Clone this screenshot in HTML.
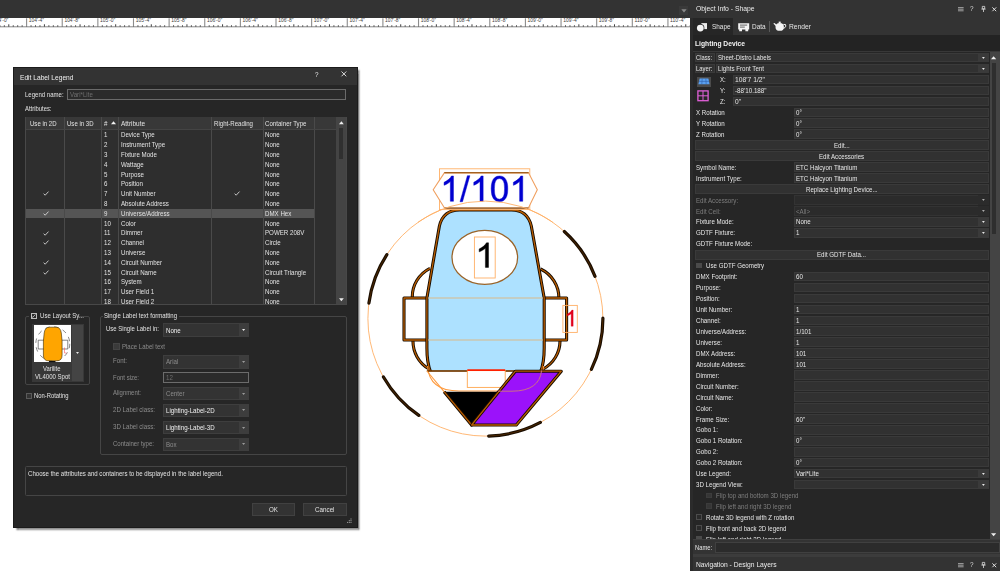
<!DOCTYPE html>
<html><head><meta charset="utf-8"><title>Edit Label Legend</title>
<style>
html,body{margin:0;padding:0;width:1000px;height:571px;overflow:hidden;}
body{width:1000px;height:571px;overflow:hidden;background:#fff;position:relative;font-family:"Liberation Sans",sans-serif;}
.t{position:absolute;white-space:nowrap;transform-origin:0 50%;filter:blur(.28px);}
div{box-sizing:border-box;}
svg{position:absolute;overflow:visible;}
</style></head><body>
<div style="position:absolute;left:0.00px;top:0.00px;width:1000.00px;height:17.90px;background:#333333;"></div>
<div style="position:absolute;left:678.50px;top:5.50px;width:9.00px;height:9.00px;background:#3a3a3a;"></div>
<svg style="left:680.5px;top:8.5px" width="6" height="4"><path d="M0.3 0.3 L5.7 0.3 L3 3.6 Z" fill="#8a8a8a"/></svg>
<svg style="left:0;top:17.7px" width="689.8" height="10" viewBox="0 0 689.8 10"><rect x="0" y="0" width="689.8" height="9.2" fill="#fff"/><path d="M-4.58 7.30V8.9 M-0.12 7.30V8.9 M4.33 7.30V8.9 M8.79 6.30V8.9 M13.24 7.30V8.9 M17.69 7.30V8.9 M22.15 7.30V8.9 M31.05 7.30V8.9 M35.51 7.30V8.9 M39.96 7.30V8.9 M44.42 6.30V8.9 M48.87 7.30V8.9 M53.32 7.30V8.9 M57.78 7.30V8.9 M66.68 7.30V8.9 M71.14 7.30V8.9 M75.59 7.30V8.9 M80.05 6.30V8.9 M84.50 7.30V8.9 M88.95 7.30V8.9 M93.41 7.30V8.9 M102.31 7.30V8.9 M106.77 7.30V8.9 M111.22 7.30V8.9 M115.68 6.30V8.9 M120.13 7.30V8.9 M124.58 7.30V8.9 M129.04 7.30V8.9 M137.94 7.30V8.9 M142.40 7.30V8.9 M146.85 7.30V8.9 M151.31 6.30V8.9 M155.76 7.30V8.9 M160.21 7.30V8.9 M164.67 7.30V8.9 M173.57 7.30V8.9 M178.03 7.30V8.9 M182.48 7.30V8.9 M186.94 6.30V8.9 M191.39 7.30V8.9 M195.84 7.30V8.9 M200.30 7.30V8.9 M209.20 7.30V8.9 M213.66 7.30V8.9 M218.11 7.30V8.9 M222.57 6.30V8.9 M227.02 7.30V8.9 M231.47 7.30V8.9 M235.93 7.30V8.9 M244.83 7.30V8.9 M249.29 7.30V8.9 M253.74 7.30V8.9 M258.20 6.30V8.9 M262.65 7.30V8.9 M267.10 7.30V8.9 M271.56 7.30V8.9 M280.46 7.30V8.9 M284.92 7.30V8.9 M289.37 7.30V8.9 M293.82 6.30V8.9 M298.28 7.30V8.9 M302.73 7.30V8.9 M307.19 7.30V8.9 M316.09 7.30V8.9 M320.55 7.30V8.9 M325.00 7.30V8.9 M329.45 6.30V8.9 M333.91 7.30V8.9 M338.36 7.30V8.9 M342.82 7.30V8.9 M351.72 7.30V8.9 M356.18 7.30V8.9 M360.63 7.30V8.9 M365.08 6.30V8.9 M369.54 7.30V8.9 M373.99 7.30V8.9 M378.45 7.30V8.9 M387.35 7.30V8.9 M391.81 7.30V8.9 M396.26 7.30V8.9 M400.71 6.30V8.9 M405.17 7.30V8.9 M409.62 7.30V8.9 M414.08 7.30V8.9 M422.98 7.30V8.9 M427.44 7.30V8.9 M431.89 7.30V8.9 M436.35 6.30V8.9 M440.80 7.30V8.9 M445.25 7.30V8.9 M449.71 7.30V8.9 M458.61 7.30V8.9 M463.07 7.30V8.9 M467.52 7.30V8.9 M471.98 6.30V8.9 M476.43 7.30V8.9 M480.88 7.30V8.9 M485.34 7.30V8.9 M494.24 7.30V8.9 M498.70 7.30V8.9 M503.15 7.30V8.9 M507.61 6.30V8.9 M512.06 7.30V8.9 M516.51 7.30V8.9 M520.97 7.30V8.9 M529.87 7.30V8.9 M534.33 7.30V8.9 M538.78 7.30V8.9 M543.24 6.30V8.9 M547.69 7.30V8.9 M552.14 7.30V8.9 M556.60 7.30V8.9 M565.50 7.30V8.9 M569.96 7.30V8.9 M574.41 7.30V8.9 M578.87 6.30V8.9 M583.32 7.30V8.9 M587.77 7.30V8.9 M592.23 7.30V8.9 M601.13 7.30V8.9 M605.59 7.30V8.9 M610.04 7.30V8.9 M614.50 6.30V8.9 M618.95 7.30V8.9 M623.40 7.30V8.9 M627.86 7.30V8.9 M636.76 7.30V8.9 M641.22 7.30V8.9 M645.67 7.30V8.9 M650.13 6.30V8.9 M654.58 7.30V8.9 M659.03 7.30V8.9 M663.49 7.30V8.9 M672.39 7.30V8.9 M676.85 7.30V8.9 M681.30 7.30V8.9 M685.76 6.30V8.9 M690.21 7.30V8.9 M694.66 7.30V8.9 M699.12 7.30V8.9 M708.02 7.30V8.9 M712.48 7.30V8.9 M716.93 7.30V8.9 M721.39 6.30V8.9 M725.84 7.30V8.9 M730.29 7.30V8.9 M734.75 7.30V8.9" stroke="#333" stroke-width="0.95" fill="none"/><path d="M-9.03 0.3V8.9 M26.60 0.3V8.9 M62.23 0.3V8.9 M97.86 0.3V8.9 M133.49 0.3V8.9 M169.12 0.3V8.9 M204.75 0.3V8.9 M240.38 0.3V8.9 M276.01 0.3V8.9 M311.64 0.3V8.9 M347.27 0.3V8.9 M382.90 0.3V8.9 M418.53 0.3V8.9 M454.16 0.3V8.9 M489.79 0.3V8.9 M525.42 0.3V8.9 M561.05 0.3V8.9 M596.68 0.3V8.9 M632.31 0.3V8.9 M667.94 0.3V8.9 M703.57 0.3V8.9" stroke="#8c8c8c" stroke-width="1.1" fill="none"/><path d="M0 8.8H689.8" stroke="#6a6a6a" stroke-width="0.8"/><text x="-6.83" y="4.5" font-size="4.7" fill="#3a3a3a" textLength="15.2" lengthAdjust="spacingAndGlyphs">104'-0&quot;</text><text x="28.80" y="4.5" font-size="4.7" fill="#3a3a3a" textLength="15.2" lengthAdjust="spacingAndGlyphs">104'-4&quot;</text><text x="64.43" y="4.5" font-size="4.7" fill="#3a3a3a" textLength="15.2" lengthAdjust="spacingAndGlyphs">104'-8&quot;</text><text x="100.06" y="4.5" font-size="4.7" fill="#3a3a3a" textLength="15.2" lengthAdjust="spacingAndGlyphs">105'-0&quot;</text><text x="135.69" y="4.5" font-size="4.7" fill="#3a3a3a" textLength="15.2" lengthAdjust="spacingAndGlyphs">105'-4&quot;</text><text x="171.32" y="4.5" font-size="4.7" fill="#3a3a3a" textLength="15.2" lengthAdjust="spacingAndGlyphs">105'-8&quot;</text><text x="206.95" y="4.5" font-size="4.7" fill="#3a3a3a" textLength="15.2" lengthAdjust="spacingAndGlyphs">106'-0&quot;</text><text x="242.58" y="4.5" font-size="4.7" fill="#3a3a3a" textLength="15.2" lengthAdjust="spacingAndGlyphs">106'-4&quot;</text><text x="278.21" y="4.5" font-size="4.7" fill="#3a3a3a" textLength="15.2" lengthAdjust="spacingAndGlyphs">106'-8&quot;</text><text x="313.84" y="4.5" font-size="4.7" fill="#3a3a3a" textLength="15.2" lengthAdjust="spacingAndGlyphs">107'-0&quot;</text><text x="349.47" y="4.5" font-size="4.7" fill="#3a3a3a" textLength="15.2" lengthAdjust="spacingAndGlyphs">107'-4&quot;</text><text x="385.10" y="4.5" font-size="4.7" fill="#3a3a3a" textLength="15.2" lengthAdjust="spacingAndGlyphs">107'-8&quot;</text><text x="420.73" y="4.5" font-size="4.7" fill="#3a3a3a" textLength="15.2" lengthAdjust="spacingAndGlyphs">108'-0&quot;</text><text x="456.36" y="4.5" font-size="4.7" fill="#3a3a3a" textLength="15.2" lengthAdjust="spacingAndGlyphs">108'-4&quot;</text><text x="491.99" y="4.5" font-size="4.7" fill="#3a3a3a" textLength="15.2" lengthAdjust="spacingAndGlyphs">108'-8&quot;</text><text x="527.62" y="4.5" font-size="4.7" fill="#3a3a3a" textLength="15.2" lengthAdjust="spacingAndGlyphs">109'-0&quot;</text><text x="563.25" y="4.5" font-size="4.7" fill="#3a3a3a" textLength="15.2" lengthAdjust="spacingAndGlyphs">109'-4&quot;</text><text x="598.88" y="4.5" font-size="4.7" fill="#3a3a3a" textLength="15.2" lengthAdjust="spacingAndGlyphs">109'-8&quot;</text><text x="634.51" y="4.5" font-size="4.7" fill="#3a3a3a" textLength="15.2" lengthAdjust="spacingAndGlyphs">110'-0&quot;</text><text x="670.14" y="4.5" font-size="4.7" fill="#3a3a3a" textLength="15.2" lengthAdjust="spacingAndGlyphs">110'-4&quot;</text><text x="705.77" y="4.5" font-size="4.7" fill="#3a3a3a" textLength="15.2" lengthAdjust="spacingAndGlyphs">110'-8&quot;</text></svg>
<div style="position:absolute;left:689.80px;top:17.70px;width:3.50px;height:553.30px;background:#2b2b2b;"></div>
<svg style="left:0;top:0" width="1000" height="571" viewBox="0 0 1000 571"><circle cx="485.4" cy="318.6" r="117.5" fill="none" stroke="#ffb066" stroke-width="0.9"/><path d="M368.93 303.06A117.5 117.5 0 0 1 386.86 254.60 M564.33 231.56A117.5 117.5 0 0 1 595.02 276.30 M602.90 318.19A117.5 117.5 0 0 1 591.37 369.37 M540.38 422.44A117.5 117.5 0 0 1 488.68 436.05 M418.85 415.43A117.5 117.5 0 0 1 383.44 376.99" fill="none" stroke="#1a0d00" stroke-width="3.2" stroke-linecap="round"/><path d="M368.93 303.06A117.5 117.5 0 0 1 386.86 254.60 M564.33 231.56A117.5 117.5 0 0 1 595.02 276.30 M602.90 318.19A117.5 117.5 0 0 1 591.37 369.37 M540.38 422.44A117.5 117.5 0 0 1 488.68 436.05 M418.85 415.43A117.5 117.5 0 0 1 383.44 376.99" fill="none" stroke="#4a2600" stroke-width="1.0" stroke-linecap="round"/><path d="M412.3 298 A32 32 0 0 1 430 268.3 M558.9 298 A32 32 0 0 0 540.6 269 M413 340 A32 32 0 0 0 429 369 M560 340 A32 32 0 0 1 542.4 369.4" fill="none" stroke="#140a00" stroke-width="3.1" stroke-linejoin="round"/><path d="M412.3 298 A32 32 0 0 1 430 268.3 M558.9 298 A32 32 0 0 0 540.6 269 M413 340 A32 32 0 0 0 429 369 M560 340 A32 32 0 0 1 542.4 369.4" fill="none" stroke="#b85c00" stroke-width="1.3" stroke-linejoin="round"/><path d="M404 298 H566.6 V340 H404 Z" fill="#fff" stroke="#140a00" stroke-width="3.1" stroke-linejoin="round"/><path d="M404 298 H566.6 V340 H404 Z" fill="none" stroke="#b85c00" stroke-width="1.3" stroke-linejoin="round"/><defs><clipPath id="cb"><rect x="380" y="190" width="220" height="181.2"/></clipPath></defs><g clip-path="url(#cb)"><path d="M459.5 210 H511.5 Q527.5 210 531.3 226 L544.2 298 V348 Q544.2 391 512 391 H459 Q426.9 391 426.9 348 V298 L439.4 226 Q443.2 210 459.5 210 Z" fill="#ade1ff" stroke="#140a00" stroke-width="3.1" stroke-linejoin="round"/><path d="M459.5 210 H511.5 Q527.5 210 531.3 226 L544.2 298 V348 Q544.2 391 512 391 H459 Q426.9 391 426.9 348 V298 L439.4 226 Q443.2 210 459.5 210 Z" fill="none" stroke="#b85c00" stroke-width="1.3" stroke-linejoin="round"/></g><path d="M428 298 H543 M428 340 H543" stroke="#d9b98a" stroke-width="1.1" fill="none"/><path d="M426.9 371 H515.4 L471.6 425 Z" fill="#fff"/><path d="M427.6 366 Q429 391 459 391 H512 Q542 391 543.6 366" fill="none" stroke="#ff9a3d" stroke-width="1.1"/><path d="M444.1 391.7 H498.6 L471.6 425 Z" fill="#000"/><path d="M426.9 371 H515.4" fill="none" stroke="#3a1d00" stroke-width="1.5" stroke-linejoin="round"/><path d="M426.9 371 H515.4" fill="none" stroke="#b85c00" stroke-width="0.8" stroke-linejoin="round"/><path d="M426.9 371 L444.1 391.7" stroke="#ff9a3d" stroke-width="1.1" fill="none"/><path d="M444.1 391.7 L471.6 425 L498.6 391.7" fill="none" stroke="#140a00" stroke-width="3.1" stroke-linejoin="round"/><path d="M444.1 391.7 L471.6 425 L498.6 391.7" fill="none" stroke="#b85c00" stroke-width="1.3" stroke-linejoin="round"/><rect x="467.3" y="370.6" width="37.9" height="16.8" fill="#fff" stroke="#ffa64d" stroke-width="0.9"/><path d="M467.3 370.1 H505.2" stroke="#ff2000" stroke-width="1.6"/><path d="M515.4 371.2 H561.3 L516.3 425 H471.6 Z" fill="#9b12fa" stroke="#140a00" stroke-width="3.1" stroke-linejoin="round"/><path d="M515.4 371.2 H561.3 L516.3 425 H471.6 Z" fill="none" stroke="#b85c00" stroke-width="1.3" stroke-linejoin="round"/><path d="M498 391.2 H512 Q539.5 391 541.6 370.5" fill="none" stroke="#cc6f86" stroke-width="1" /><ellipse cx="484.8" cy="257.4" rx="32.8" ry="27" fill="#fff" stroke="#9a6328" stroke-width="1.25"/><rect x="474.4" y="237" width="20.8" height="41" fill="none" stroke="#ffb066" stroke-width="0.9"/><path transform="translate(475.30 267.4) scale(0.01733 -0.01670)" d="M763 0H583V1147Q518 1085 412.5 1023Q307 961 223 930V1104Q374 1175 487 1276Q600 1377 647 1472H763Z" fill="#000" stroke="#000" stroke-width="26.0"/><rect x="439.5" y="168.8" width="90.3" height="40.8" fill="#fff" stroke="#ffb066" stroke-width="0.9"/><path d="M433.2 189.8 L444.5 172.6 H528.4 L537.3 189.8 L528.4 208 H444.5 Z" fill="#fff" stroke="#f0a060" stroke-width="1.1"/><path d="M444.5 172.5 H528.4 M444.5 208 H528.4" fill="none" stroke="#86501c" stroke-width="1.25"/><path d="M444.5 173 H528.4" fill="none" stroke="#d9822b" stroke-width="0.7"/><path transform="translate(440.20 201.3) scale(0.01738 -0.01719)" d="M763 0H583V1147Q518 1085 412.5 1023Q307 961 223 930V1104Q374 1175 487 1276Q600 1377 647 1472H763Z" fill="#0000d0" stroke="#0000d0" stroke-width="25.9"/><path transform="translate(460.00 201.3) scale(0.01738 -0.01719)" d="M0 -25L425 1491H569L145 -25Z" fill="#0000d0" stroke="#0000d0" stroke-width="25.9"/><path transform="translate(469.89 201.3) scale(0.01738 -0.01719)" d="M763 0H583V1147Q518 1085 412.5 1023Q307 961 223 930V1104Q374 1175 487 1276Q600 1377 647 1472H763Z" fill="#0000d0" stroke="#0000d0" stroke-width="25.9"/><path transform="translate(489.69 201.3) scale(0.01738 -0.01719)" d="M85 723Q85 983 138.5 1141.5Q192 1300 297.5 1386Q403 1472 563 1472Q681 1472 770 1424.5Q859 1377 917 1287.5Q975 1198 1008 1069.5Q1041 941 1041 723Q1041 465 988 306.5Q935 148 829.5 61.5Q724 -25 563 -25Q351 -25 230 127Q85 310 85 723ZM270 723Q270 362 354.5 242.5Q439 123 563 123Q687 123 771.5 243Q856 363 856 723Q856 1085 771.5 1204Q687 1323 561 1323Q437 1323 363 1218Q270 1084 270 723Z" fill="#0000d0" stroke="#0000d0" stroke-width="25.9"/><path transform="translate(509.49 201.3) scale(0.01738 -0.01719)" d="M763 0H583V1147Q518 1085 412.5 1023Q307 961 223 930V1104Q374 1175 487 1276Q600 1377 647 1472H763Z" fill="#0000d0" stroke="#0000d0" stroke-width="25.9"/><path d="M418.00 222.35A117.5 117.5 0 0 1 552.80 222.35" fill="none" stroke="#ffb066" stroke-width="0.9"/><rect x="562.9" y="305.4" width="14.4" height="27" fill="none" stroke="#ffb066" stroke-width="0.9"/><path transform="translate(564.60 326.2) scale(0.01123 -0.01094)" d="M763 0H583V1147Q518 1085 412.5 1023Q307 961 223 930V1104Q374 1175 487 1276Q600 1377 647 1472H763Z" fill="#e0001a" stroke="#e0001a" stroke-width="26.7"/></svg>
<div style="position:absolute;left:13.2px;top:67.0px;width:344.9px;height:461.4px;background:#262626;border:0.8px solid #1b1b1b;box-shadow:2.2px 2.6px 1.6px -0.6px rgba(0,0,0,.5);"></div>
<div style="position:absolute;left:13.80px;top:67.60px;width:343.70px;height:17.20px;background:#333333;"></div>
<div class="t" style="left:19.90px;top:73.94px;font-size:8px;line-height:8px;color:#f0f0f0;transform:scaleX(0.8295);">Edit Label Legend</div>
<div class="t" style="left:315.05px;top:71.11px;font-size:7px;line-height:7px;color:#e8e8e8;transform:scaleX(0.9000);">?</div>
<svg style="left:341px;top:71px" width="6" height="6"><path d="M0.5 0.5L5.3 5.3M5.3 0.5L0.5 5.3" stroke="#e8e8e8" stroke-width="0.9" fill="none"/></svg>
<div class="t" style="left:24.80px;top:90.64px;font-size:8px;line-height:8px;color:#e2e2e2;transform:scaleX(0.7547);">Legend name:</div>
<div style="position:absolute;left:67.2px;top:88.8px;width:278.5px;height:11.3px;background:#2b2b2b;border:0.9px solid #6a6a6a;"></div>
<div class="t" style="left:69.50px;top:90.64px;font-size:8px;line-height:8px;color:#6e6e6e;transform:scaleX(0.7700);">Vari*Lite</div>
<div class="t" style="left:24.80px;top:105.24px;font-size:8px;line-height:8px;color:#e2e2e2;transform:scaleX(0.7358);">Attributes:</div>
<div style="position:absolute;left:25.30px;top:116.60px;width:321.30px;height:188.40px;background:#2e2e2e;border:0.8px solid #484848;"></div>
<div style="position:absolute;left:25.80px;top:117.10px;width:310.50px;height:12.60px;background:#383838;"></div>
<div style="position:absolute;left:336.30px;top:117.10px;width:9.80px;height:187.40px;background:#444444;"></div>
<div style="position:absolute;left:338.90px;top:128.20px;width:4.00px;height:31.20px;background:#303030;"></div>
<svg style="left:338.6px;top:121px" width="5" height="4"><path d="M0 3.2L2.4 0.3L4.8 3.2Z" fill="#eee"/></svg>
<svg style="left:338.6px;top:298px" width="5" height="4"><path d="M0 0.3L2.4 3.2L4.8 0.3Z" fill="#eee"/></svg>
<div style="position:absolute;left:25.90px;top:208.74px;width:288.20px;height:9.50px;background:#555555;"></div>
<div style="position:absolute;left:63.60px;top:117.10px;width:0.90px;height:187.40px;background:#4a4a4a;"></div>
<div style="position:absolute;left:101.00px;top:117.10px;width:0.90px;height:187.40px;background:#4a4a4a;"></div>
<div style="position:absolute;left:117.60px;top:117.10px;width:0.90px;height:187.40px;background:#4a4a4a;"></div>
<div style="position:absolute;left:211.10px;top:117.10px;width:0.90px;height:187.40px;background:#4a4a4a;"></div>
<div style="position:absolute;left:262.80px;top:117.10px;width:0.90px;height:187.40px;background:#4a4a4a;"></div>
<div style="position:absolute;left:313.70px;top:117.10px;width:0.90px;height:187.40px;background:#4a4a4a;"></div>
<div style="position:absolute;left:25.80px;top:129.40px;width:310.50px;height:0.80px;background:#444;"></div>
<div class="t" style="left:29.50px;top:120.24px;font-size:8px;line-height:8px;color:#e2e2e2;transform:scaleX(0.7545);">Use in 2D</div>
<div class="t" style="left:66.70px;top:120.24px;font-size:8px;line-height:8px;color:#e2e2e2;transform:scaleX(0.7545);">Use in 3D</div>
<div class="t" style="left:103.80px;top:120.24px;font-size:8px;line-height:8px;color:#e2e2e2;transform:scaleX(0.7700);">#</div>
<svg style="left:111.2px;top:121.4px" width="5" height="4"><path d="M0 3.3L2.5 0.2L5 3.3Z" fill="#f2f2f2"/></svg>
<div class="t" style="left:121.00px;top:120.24px;font-size:8px;line-height:8px;color:#e2e2e2;transform:scaleX(0.8056);">Attribute</div>
<div class="t" style="left:213.60px;top:120.24px;font-size:8px;line-height:8px;color:#e2e2e2;transform:scaleX(0.7626);">Right-Reading</div>
<div class="t" style="left:265.20px;top:120.24px;font-size:8px;line-height:8px;color:#e2e2e2;transform:scaleX(0.7670);">Container Type</div>
<div class="t" style="left:103.60px;top:131.34px;font-size:8px;line-height:8px;color:#e2e2e2;transform:scaleX(0.7700);">1</div>
<div class="t" style="left:120.80px;top:131.34px;font-size:8px;line-height:8px;color:#e2e2e2;transform:scaleX(0.7700);">Device Type</div>
<div class="t" style="left:265.00px;top:131.34px;font-size:8px;line-height:8px;color:#e2e2e2;transform:scaleX(0.7700);">None</div>
<div class="t" style="left:103.60px;top:141.15px;font-size:8px;line-height:8px;color:#e2e2e2;transform:scaleX(0.7700);">2</div>
<div class="t" style="left:120.80px;top:141.15px;font-size:8px;line-height:8px;color:#e2e2e2;transform:scaleX(0.7700);">Instrument Type</div>
<div class="t" style="left:265.00px;top:141.15px;font-size:8px;line-height:8px;color:#e2e2e2;transform:scaleX(0.7700);">None</div>
<div class="t" style="left:103.60px;top:150.95px;font-size:8px;line-height:8px;color:#e2e2e2;transform:scaleX(0.7700);">3</div>
<div class="t" style="left:120.80px;top:150.95px;font-size:8px;line-height:8px;color:#e2e2e2;transform:scaleX(0.7700);">Fixture Mode</div>
<div class="t" style="left:265.00px;top:150.95px;font-size:8px;line-height:8px;color:#e2e2e2;transform:scaleX(0.7700);">None</div>
<div class="t" style="left:103.60px;top:160.75px;font-size:8px;line-height:8px;color:#e2e2e2;transform:scaleX(0.7700);">4</div>
<div class="t" style="left:120.80px;top:160.75px;font-size:8px;line-height:8px;color:#e2e2e2;transform:scaleX(0.7700);">Wattage</div>
<div class="t" style="left:265.00px;top:160.75px;font-size:8px;line-height:8px;color:#e2e2e2;transform:scaleX(0.7700);">None</div>
<div class="t" style="left:103.60px;top:170.56px;font-size:8px;line-height:8px;color:#e2e2e2;transform:scaleX(0.7700);">5</div>
<div class="t" style="left:120.80px;top:170.56px;font-size:8px;line-height:8px;color:#e2e2e2;transform:scaleX(0.7700);">Purpose</div>
<div class="t" style="left:265.00px;top:170.56px;font-size:8px;line-height:8px;color:#e2e2e2;transform:scaleX(0.7700);">None</div>
<div class="t" style="left:103.60px;top:180.37px;font-size:8px;line-height:8px;color:#e2e2e2;transform:scaleX(0.7700);">6</div>
<div class="t" style="left:120.80px;top:180.37px;font-size:8px;line-height:8px;color:#e2e2e2;transform:scaleX(0.7700);">Position</div>
<div class="t" style="left:265.00px;top:180.37px;font-size:8px;line-height:8px;color:#e2e2e2;transform:scaleX(0.7700);">None</div>
<div class="t" style="left:103.60px;top:190.17px;font-size:8px;line-height:8px;color:#e2e2e2;transform:scaleX(0.7700);">7</div>
<div class="t" style="left:120.80px;top:190.17px;font-size:8px;line-height:8px;color:#e2e2e2;transform:scaleX(0.7700);">Unit Number</div>
<div class="t" style="left:265.00px;top:190.17px;font-size:8px;line-height:8px;color:#e2e2e2;transform:scaleX(0.7700);">None</div>
<svg style="left:42.50px;top:191.43px" width="6.00" height="5.00" viewBox="0 0 6 5"><path d="M0.6 2.7L2.2 4.2L5.5 0.6" stroke="#e8e8e8" stroke-width="0.8" fill="none"/></svg>
<svg style="left:234.00px;top:191.43px" width="6.00" height="5.00" viewBox="0 0 6 5"><path d="M0.6 2.7L2.2 4.2L5.5 0.6" stroke="#e8e8e8" stroke-width="0.8" fill="none"/></svg>
<div class="t" style="left:103.60px;top:199.97px;font-size:8px;line-height:8px;color:#e2e2e2;transform:scaleX(0.7700);">8</div>
<div class="t" style="left:120.80px;top:199.97px;font-size:8px;line-height:8px;color:#e2e2e2;transform:scaleX(0.7700);">Absolute Address</div>
<div class="t" style="left:265.00px;top:199.97px;font-size:8px;line-height:8px;color:#e2e2e2;transform:scaleX(0.7700);">None</div>
<div class="t" style="left:103.60px;top:209.78px;font-size:8px;line-height:8px;color:#e2e2e2;transform:scaleX(0.7700);">9</div>
<div class="t" style="left:120.80px;top:209.78px;font-size:8px;line-height:8px;color:#e2e2e2;transform:scaleX(0.7700);">Universe/Address</div>
<div class="t" style="left:265.00px;top:209.78px;font-size:8px;line-height:8px;color:#e2e2e2;transform:scaleX(0.7700);">DMX Hex</div>
<svg style="left:42.50px;top:211.04px" width="6.00" height="5.00" viewBox="0 0 6 5"><path d="M0.6 2.7L2.2 4.2L5.5 0.6" stroke="#e8e8e8" stroke-width="0.8" fill="none"/></svg>
<div class="t" style="left:103.60px;top:219.59px;font-size:8px;line-height:8px;color:#e2e2e2;transform:scaleX(0.7700);">10</div>
<div class="t" style="left:120.80px;top:219.59px;font-size:8px;line-height:8px;color:#e2e2e2;transform:scaleX(0.7700);">Color</div>
<div class="t" style="left:265.00px;top:219.59px;font-size:8px;line-height:8px;color:#e2e2e2;transform:scaleX(0.7700);">None</div>
<div class="t" style="left:103.60px;top:229.39px;font-size:8px;line-height:8px;color:#e2e2e2;transform:scaleX(0.7700);">11</div>
<div class="t" style="left:120.80px;top:229.39px;font-size:8px;line-height:8px;color:#e2e2e2;transform:scaleX(0.7700);">Dimmer</div>
<div class="t" style="left:265.00px;top:229.39px;font-size:8px;line-height:8px;color:#e2e2e2;transform:scaleX(0.7700);">POWER 208V</div>
<svg style="left:42.50px;top:230.65px" width="6.00" height="5.00" viewBox="0 0 6 5"><path d="M0.6 2.7L2.2 4.2L5.5 0.6" stroke="#e8e8e8" stroke-width="0.8" fill="none"/></svg>
<div class="t" style="left:103.60px;top:239.19px;font-size:8px;line-height:8px;color:#e2e2e2;transform:scaleX(0.7700);">12</div>
<div class="t" style="left:120.80px;top:239.19px;font-size:8px;line-height:8px;color:#e2e2e2;transform:scaleX(0.7700);">Channel</div>
<div class="t" style="left:265.00px;top:239.19px;font-size:8px;line-height:8px;color:#e2e2e2;transform:scaleX(0.7700);">Circle</div>
<svg style="left:42.50px;top:240.45px" width="6.00" height="5.00" viewBox="0 0 6 5"><path d="M0.6 2.7L2.2 4.2L5.5 0.6" stroke="#e8e8e8" stroke-width="0.8" fill="none"/></svg>
<div class="t" style="left:103.60px;top:249.00px;font-size:8px;line-height:8px;color:#e2e2e2;transform:scaleX(0.7700);">13</div>
<div class="t" style="left:120.80px;top:249.00px;font-size:8px;line-height:8px;color:#e2e2e2;transform:scaleX(0.7700);">Universe</div>
<div class="t" style="left:265.00px;top:249.00px;font-size:8px;line-height:8px;color:#e2e2e2;transform:scaleX(0.7700);">None</div>
<div class="t" style="left:103.60px;top:258.81px;font-size:8px;line-height:8px;color:#e2e2e2;transform:scaleX(0.7700);">14</div>
<div class="t" style="left:120.80px;top:258.81px;font-size:8px;line-height:8px;color:#e2e2e2;transform:scaleX(0.7700);">Circuit Number</div>
<div class="t" style="left:265.00px;top:258.81px;font-size:8px;line-height:8px;color:#e2e2e2;transform:scaleX(0.7700);">None</div>
<svg style="left:42.50px;top:260.06px" width="6.00" height="5.00" viewBox="0 0 6 5"><path d="M0.6 2.7L2.2 4.2L5.5 0.6" stroke="#e8e8e8" stroke-width="0.8" fill="none"/></svg>
<div class="t" style="left:103.60px;top:268.61px;font-size:8px;line-height:8px;color:#e2e2e2;transform:scaleX(0.7700);">15</div>
<div class="t" style="left:120.80px;top:268.61px;font-size:8px;line-height:8px;color:#e2e2e2;transform:scaleX(0.7700);">Circuit Name</div>
<div class="t" style="left:265.00px;top:268.61px;font-size:8px;line-height:8px;color:#e2e2e2;transform:scaleX(0.7700);">Circuit Triangle</div>
<svg style="left:42.50px;top:269.87px" width="6.00" height="5.00" viewBox="0 0 6 5"><path d="M0.6 2.7L2.2 4.2L5.5 0.6" stroke="#e8e8e8" stroke-width="0.8" fill="none"/></svg>
<div class="t" style="left:103.60px;top:278.41px;font-size:8px;line-height:8px;color:#e2e2e2;transform:scaleX(0.7700);">16</div>
<div class="t" style="left:120.80px;top:278.41px;font-size:8px;line-height:8px;color:#e2e2e2;transform:scaleX(0.7700);">System</div>
<div class="t" style="left:265.00px;top:278.41px;font-size:8px;line-height:8px;color:#e2e2e2;transform:scaleX(0.7700);">None</div>
<div class="t" style="left:103.60px;top:288.22px;font-size:8px;line-height:8px;color:#e2e2e2;transform:scaleX(0.7700);">17</div>
<div class="t" style="left:120.80px;top:288.22px;font-size:8px;line-height:8px;color:#e2e2e2;transform:scaleX(0.7700);">User Field 1</div>
<div class="t" style="left:265.00px;top:288.22px;font-size:8px;line-height:8px;color:#e2e2e2;transform:scaleX(0.7700);">None</div>
<div class="t" style="left:103.60px;top:298.02px;font-size:8px;line-height:8px;color:#e2e2e2;transform:scaleX(0.7700);">18</div>
<div class="t" style="left:120.80px;top:298.02px;font-size:8px;line-height:8px;color:#e2e2e2;transform:scaleX(0.7700);">User Field 2</div>
<div class="t" style="left:265.00px;top:298.02px;font-size:8px;line-height:8px;color:#e2e2e2;transform:scaleX(0.7700);">None</div>
<div style="position:absolute;left:25.2px;top:315.7px;width:65.0px;height:69.5px;border:0.8px solid #454545;border-radius:2px;"></div>
<div style="position:absolute;left:29.00px;top:311.00px;width:50.00px;height:9.00px;background:#262626;"></div>
<div style="position:absolute;left:30.6px;top:312.6px;width:6.2px;height:6.2px;background:#2b2b2b;border:0.8px solid #bdbdbd;"></div>
<svg style="left:31.30px;top:313.70px" width="4.80" height="4.00" viewBox="0 0 6 5"><path d="M0.6 2.7L2.2 4.2L5.5 0.6" stroke="#fff" stroke-width="0.8" fill="none"/></svg>
<div class="t" style="left:39.50px;top:312.44px;font-size:8px;line-height:8px;color:#e2e2e2;transform:scaleX(0.7573);">Use Layout Sy...</div>
<div style="position:absolute;left:32.10px;top:323.50px;width:51.60px;height:58.00px;background:#383838;"></div>
<div style="position:absolute;left:72.30px;top:324.50px;width:10.60px;height:56.00px;background:#444444;"></div>
<svg style="left:75.8px;top:351.6px" width="3.2" height="2.4"><path d="M0 0.1L1.5 2L3 0.1Z" fill="#e6e6e6"/></svg>
<div style="position:absolute;left:34.20px;top:325.20px;width:37.20px;height:37.20px;background:#ffffff;"></div>
<svg style="left:34.2px;top:325.2px" width="37.2" height="37.2" viewBox="0 0 37.2 37.2"><circle cx="18.8" cy="18.8" r="17" fill="none" stroke="#555" stroke-width="0.7" stroke-dasharray="4.5 4.5"/><path d="M4.2 15.2H33.8V24H4.2Z" fill="#fff" stroke="#333" stroke-width="0.6"/><path d="M15.5 2.2H22Q26.6 2.2 27.3 8L28.1 16V30Q28.1 35.8 23 35.8H14.4Q9.4 35.8 9.4 30V16L10.2 8Q10.9 2.2 15.5 2.2Z" fill="#ffa500" stroke="#3a2a00" stroke-width="0.6"/><path d="M30.5 22.5V28H32.6" stroke="#ff5a5a" stroke-width="0.6" fill="none"/><path d="M15 36.6H21.5" stroke="#111" stroke-width="1.2"/></svg>
<div class="t" style="left:43.45px;top:365.14px;font-size:8px;line-height:8px;color:#e2e2e2;transform:scaleX(0.7335);">Varilite</div>
<div class="t" style="left:34.70px;top:372.54px;font-size:8px;line-height:8px;color:#e2e2e2;transform:scaleX(0.7566);">VL4000 Spot</div>
<div style="position:absolute;left:25.7px;top:393px;width:6.2px;height:6.2px;background:#333;border:0.8px solid #5a5a5a;"></div>
<div class="t" style="left:34.20px;top:392.24px;font-size:8px;line-height:8px;color:#e2e2e2;transform:scaleX(0.7320);">Non-Rotating</div>
<div style="position:absolute;left:99.8px;top:315.7px;width:246.8px;height:139.60000000000002px;border:0.8px solid #454545;border-radius:2px;"></div>
<div style="position:absolute;left:103.00px;top:311.00px;width:76.00px;height:9.00px;background:#262626;"></div>
<div class="t" style="left:104.40px;top:311.74px;font-size:8px;line-height:8px;color:#e2e2e2;transform:scaleX(0.7531);">Single Label text formatting</div>
<div class="t" style="left:105.80px;top:325.24px;font-size:8px;line-height:8px;color:#e2e2e2;transform:scaleX(0.7449);">Use Single Label in:</div>
<div style="position:absolute;left:163.30px;top:323.40px;width:86.00px;height:13.60px;background:#333333;border:0.8px solid #3e3e3e;"></div>
<div style="position:absolute;left:238.50px;top:324.20px;width:10.00px;height:12.00px;background:#3d3d3d;"></div>
<svg style="left:242.20px;top:329.40px" width="3.4" height="2.4"><path d="M0 0.1L1.6 2.1L3.2 0.1Z" fill="#e6e6e6"/></svg>
<div class="t" style="left:165.50px;top:326.54px;font-size:8px;line-height:8px;color:#f0f0f0;transform:scaleX(0.7700);">None</div>
<div style="position:absolute;left:113.4px;top:343.4px;width:6.3px;height:6.3px;background:#3a3a3a;border:0.8px solid #444;"></div>
<div class="t" style="left:122.00px;top:342.84px;font-size:8px;line-height:8px;color:#8c8c8c;transform:scaleX(0.7554);">Place Label text</div>
<div class="t" style="left:112.90px;top:357.44px;font-size:8px;line-height:8px;color:#8c8c8c;transform:scaleX(0.7700);">Font:</div>
<div style="position:absolute;left:163.30px;top:355.40px;width:86.00px;height:13.50px;background:#333333;border:0.8px solid #3e3e3e;"></div>
<div style="position:absolute;left:238.50px;top:356.20px;width:10.00px;height:11.90px;background:#3d3d3d;"></div>
<svg style="left:242.20px;top:361.35px" width="3.4" height="2.4"><path d="M0 0.1L1.6 2.1L3.2 0.1Z" fill="#999"/></svg>
<div class="t" style="left:165.50px;top:358.49px;font-size:8px;line-height:8px;color:#8c8c8c;transform:scaleX(0.7700);">Arial</div>
<div class="t" style="left:112.90px;top:373.84px;font-size:8px;line-height:8px;color:#8c8c8c;transform:scaleX(0.7498);">Font size:</div>
<div style="position:absolute;left:163.3px;top:371.8px;width:86px;height:11.2px;background:#2b2b2b;border:0.9px solid #6c6c6c;"></div>
<div class="t" style="left:165.50px;top:373.84px;font-size:8px;line-height:8px;color:#6e6e6e;transform:scaleX(0.7700);">12</div>
<div class="t" style="left:112.90px;top:389.14px;font-size:8px;line-height:8px;color:#8c8c8c;transform:scaleX(0.7408);">Alignment:</div>
<div style="position:absolute;left:163.30px;top:387.00px;width:86.00px;height:13.20px;background:#333333;border:0.8px solid #3e3e3e;"></div>
<div style="position:absolute;left:238.50px;top:387.80px;width:10.00px;height:11.60px;background:#3d3d3d;"></div>
<svg style="left:242.20px;top:392.80px" width="3.4" height="2.4"><path d="M0 0.1L1.6 2.1L3.2 0.1Z" fill="#999"/></svg>
<div class="t" style="left:165.50px;top:389.94px;font-size:8px;line-height:8px;color:#8c8c8c;transform:scaleX(0.7700);">Center</div>
<div class="t" style="left:112.90px;top:406.04px;font-size:8px;line-height:8px;color:#8c8c8c;transform:scaleX(0.7679);">2D Label class:</div>
<div style="position:absolute;left:163.30px;top:403.50px;width:86.00px;height:13.50px;background:#333333;border:0.8px solid #3e3e3e;"></div>
<div style="position:absolute;left:238.50px;top:404.30px;width:10.00px;height:11.90px;background:#3d3d3d;"></div>
<svg style="left:242.20px;top:409.45px" width="3.4" height="2.4"><path d="M0 0.1L1.6 2.1L3.2 0.1Z" fill="#999"/></svg>
<div class="t" style="left:165.50px;top:406.59px;font-size:8px;line-height:8px;color:#f0f0f0;transform:scaleX(0.7700);">Lighting-Label-2D</div>
<div class="t" style="left:112.90px;top:423.24px;font-size:8px;line-height:8px;color:#8c8c8c;transform:scaleX(0.7679);">3D Label class:</div>
<div style="position:absolute;left:163.30px;top:420.60px;width:86.00px;height:13.80px;background:#333333;border:0.8px solid #3e3e3e;"></div>
<div style="position:absolute;left:238.50px;top:421.40px;width:10.00px;height:12.20px;background:#3d3d3d;"></div>
<svg style="left:242.20px;top:426.70px" width="3.4" height="2.4"><path d="M0 0.1L1.6 2.1L3.2 0.1Z" fill="#999"/></svg>
<div class="t" style="left:165.50px;top:423.84px;font-size:8px;line-height:8px;color:#f0f0f0;transform:scaleX(0.7700);">Lighting-Label-3D</div>
<div class="t" style="left:112.90px;top:439.84px;font-size:8px;line-height:8px;color:#8c8c8c;transform:scaleX(0.7558);">Container type:</div>
<div style="position:absolute;left:163.30px;top:437.60px;width:86.00px;height:13.20px;background:#333333;border:0.8px solid #3e3e3e;"></div>
<div style="position:absolute;left:238.50px;top:438.40px;width:10.00px;height:11.60px;background:#3d3d3d;"></div>
<svg style="left:242.20px;top:443.40px" width="3.4" height="2.4"><path d="M0 0.1L1.6 2.1L3.2 0.1Z" fill="#999"/></svg>
<div class="t" style="left:165.50px;top:440.54px;font-size:8px;line-height:8px;color:#8c8c8c;transform:scaleX(0.7700);">Box</div>
<div style="position:absolute;left:25.3px;top:465.5px;width:321.3px;height:30px;border:0.8px solid #454545;border-radius:1.5px;"></div>
<div class="t" style="left:28.00px;top:469.54px;font-size:8px;line-height:8px;color:#e2e2e2;transform:scaleX(0.7605);">Choose the attributes and containers to be displayed in the label legend.</div>
<div style="position:absolute;left:252px;top:503.3px;width:42.8px;height:12.8px;background:#333;border:0.8px solid #414141;"></div>
<div style="position:absolute;left:303.3px;top:503.3px;width:43.5px;height:12.8px;background:#333;border:0.8px solid #414141;"></div>
<div class="t" style="left:268.95px;top:506.04px;font-size:8px;line-height:8px;color:#e2e2e2;transform:scaleX(0.7700);">OK</div>
<div class="t" style="left:315.25px;top:506.04px;font-size:8px;line-height:8px;color:#e2e2e2;transform:scaleX(0.7831);">Cancel</div>
<svg style="left:347px;top:518px" width="5" height="5"><path d="M4 0.5V1.5M4 2.2V3.2M4 3.9V4.9M2.3 2.2V3.2M2.3 3.9V4.9M0.6 3.9V4.9" stroke="#bbb" stroke-width="0.9"/></svg>
<div style="position:absolute;left:693.20px;top:0.00px;width:306.80px;height:571.00px;background:#262626;"></div>
<div style="position:absolute;left:689.30px;top:0.00px;width:4.00px;height:17.20px;background:#333333;"></div>
<div style="position:absolute;left:693.20px;top:0.00px;width:306.80px;height:17.60px;background:#333333;"></div>
<div class="t" style="left:695.50px;top:4.74px;font-size:8px;line-height:8px;color:#ececec;transform:scaleX(0.8502);">Object Info - Shape</div>
<svg style="left:958.3px;top:6.499999999999999px" width="6" height="5"><path d="M0 0.6H5.6M0 2.2H5.6M0 3.8H5.6" stroke="#d0d0d0" stroke-width="0.7"/></svg>
<div class="t" style="left:970.13px;top:5.17px;font-size:7.5px;line-height:7.5px;color:#dcdcdc;transform:scaleX(0.8500);">?</div>
<svg style="left:980.5px;top:5.699999999999999px" width="5" height="6.5"><path d="M1.3 0.4H3.7V2.8H1.3ZM0.4 3.1H4.6M2.5 3.1V6" stroke="#dcdcdc" stroke-width="0.8" fill="none"/></svg>
<svg style="left:991.8px;top:6.499999999999999px" width="5" height="5"><path d="M0.4 0.4L4.2 4.2M4.2 0.4L0.4 4.2" stroke="#e8e8e8" stroke-width="0.95" fill="none"/></svg>
<div style="position:absolute;left:693.20px;top:17.90px;width:306.80px;height:17.10px;background:#333333;"></div>
<div style="position:absolute;left:693.20px;top:17.90px;width:40.00px;height:17.30px;background:#262626;"></div>
<div style="position:absolute;left:769.40px;top:20.50px;width:0.70px;height:11.50px;background:#5a5a5a;"></div>
<svg style="left:695.6px;top:21.5px" width="13" height="10" viewBox="0 0 13 10"><rect x="5.4" y="1.1" width="5.6" height="6" fill="#ededed"/><circle cx="4.3" cy="6.1" r="4.1" fill="#262626"/><circle cx="4.3" cy="6.1" r="3.4" fill="#f4f4f4"/></svg>
<div class="t" style="left:711.60px;top:22.64px;font-size:8px;line-height:8px;color:#e6e6e6;transform:scaleX(0.7998);">Shape</div>
<svg style="left:738px;top:22.8px" width="11.4" height="8.5" viewBox="0 0 11.4 8.5"><path d="M0.2 0.2H11.2V6.4H10.2V8.2H7.4V6.4H4V8.2H1.2V6.4H0.2Z" fill="#f4f4f4"/><path d="M2 2.1H9.2M2 4.1H6.8" stroke="#333" stroke-width="0.75"/></svg>
<div class="t" style="left:752.40px;top:22.64px;font-size:8px;line-height:8px;color:#e6e6e6;transform:scaleX(0.8049);">Data</div>
<svg style="left:773.4px;top:21.4px" width="14" height="10" viewBox="0 0 14 10"><ellipse cx="6.7" cy="5.9" rx="4.2" ry="3.9" fill="#f4f4f4"/><path d="M5.7 0.6H7.7V2.2H5.7Z" fill="#f4f4f4"/><path d="M3.2 5.6L0.3 2.4L1.6 1.9L4 4.2Z" fill="#f4f4f4"/><path d="M10.4 3.4Q13.4 2.8 12.8 5.2Q12.2 7 10.2 7.4" stroke="#f4f4f4" stroke-width="1" fill="none"/></svg>
<div class="t" style="left:789.00px;top:22.64px;font-size:8px;line-height:8px;color:#e6e6e6;transform:scaleX(0.8385);">Render</div>
<div style="position:absolute;left:693.20px;top:35.00px;width:306.80px;height:16.00px;background:#232323;"></div>
<div class="t" style="left:695.00px;top:39.64px;font-size:8px;line-height:8px;color:#f4f4f4;font-weight:bold;transform:scaleX(0.8395);">Lighting Device</div>
<div style="position:absolute;left:693.20px;top:51.00px;width:306.80px;height:488.00px;background:#262626;"></div>
<div style="position:absolute;left:693.20px;top:51.00px;width:306.80px;height:1.20px;background:#383838;"></div>
<div style="position:absolute;left:694.80px;top:52.80px;width:19.80px;height:9.70px;background:#313131;border:0.7px solid #3a3a3a;"></div>
<div style="position:absolute;left:715.80px;top:52.80px;width:273.10px;height:9.70px;background:#313131;border:0.7px solid #3a3a3a;"></div>
<div style="position:absolute;left:978.40px;top:52.90px;width:10.50px;height:9.50px;background:#3a3a3a;"></div>
<svg style="left:982.2px;top:56.70px" width="3" height="2.2"><path d="M0 0.1L1.4 1.9L2.8 0.1Z" fill="#e6e6e6"/></svg>
<div class="t" style="left:696.20px;top:54.29px;font-size:8px;line-height:8px;color:#e6e6e6;transform:scaleX(0.7199);">Class:</div>
<div class="t" style="left:717.80px;top:54.29px;font-size:8px;line-height:8px;color:#e6e6e6;transform:scaleX(0.7544);">Sheet-Distro Labels</div>
<div style="position:absolute;left:694.80px;top:63.75px;width:19.80px;height:9.70px;background:#313131;border:0.7px solid #3a3a3a;"></div>
<div style="position:absolute;left:715.80px;top:63.75px;width:273.10px;height:9.70px;background:#313131;border:0.7px solid #3a3a3a;"></div>
<div style="position:absolute;left:978.40px;top:63.85px;width:10.50px;height:9.50px;background:#3a3a3a;"></div>
<svg style="left:982.2px;top:67.65px" width="3" height="2.2"><path d="M0 0.1L1.4 1.9L2.8 0.1Z" fill="#e6e6e6"/></svg>
<div class="t" style="left:696.20px;top:65.24px;font-size:8px;line-height:8px;color:#e6e6e6;transform:scaleX(0.7422);">Layer:</div>
<div class="t" style="left:718.20px;top:65.24px;font-size:8px;line-height:8px;color:#e6e6e6;transform:scaleX(0.7739);">Lights Front Tent</div>
<div style="position:absolute;left:733.20px;top:74.69px;width:255.70px;height:9.70px;background:#313131;border:0.7px solid #3a3a3a;"></div>
<div class="t" style="left:719.60px;top:76.18px;font-size:8px;line-height:8px;color:#e6e6e6;transform:scaleX(0.7700);">X:</div>
<div class="t" style="left:735.40px;top:76.18px;font-size:8px;line-height:8px;color:#e6e6e6;transform:scaleX(0.8450);">108'7 1/2"</div>
<div style="position:absolute;left:733.20px;top:85.64px;width:255.70px;height:9.70px;background:#313131;border:0.7px solid #3a3a3a;"></div>
<div class="t" style="left:719.60px;top:87.13px;font-size:8px;line-height:8px;color:#e6e6e6;transform:scaleX(0.7700);">Y:</div>
<div class="t" style="left:735.40px;top:87.13px;font-size:8px;line-height:8px;color:#e6e6e6;transform:scaleX(0.7798);">-88'10.188"</div>
<div style="position:absolute;left:733.20px;top:96.58px;width:255.70px;height:9.70px;background:#313131;border:0.7px solid #3a3a3a;"></div>
<div class="t" style="left:719.60px;top:98.07px;font-size:8px;line-height:8px;color:#e6e6e6;transform:scaleX(0.7700);">Z:</div>
<div class="t" style="left:735.40px;top:98.07px;font-size:8px;line-height:8px;color:#e6e6e6;transform:scaleX(0.8232);">0"</div>
<svg style="left:697.3px;top:76.8px" width="14" height="10" viewBox="0 0 14 10"><rect x="0" y="0" width="14" height="10" fill="#4a4a4a"/><path d="M2.6 1.6H11.4L12.6 7.2H1.4Z" fill="#5aa0f0"/><path d="M1.8 4.4H12.2M5.2 1.6L4.8 7.2M8.8 1.6L9.2 7.2" stroke="#2d5fa8" stroke-width="0.6"/></svg>
<svg style="left:697.3px;top:90.4px" width="12" height="11.6" viewBox="0 0 12 11.6"><rect x="0.9" y="0.9" width="10.2" height="9.8" fill="#262626" stroke="#e060d8" stroke-width="1.3"/><path d="M6 1V10.6M1 5.8H11" stroke="#e060d8" stroke-width="1.0"/></svg>
<div style="position:absolute;left:794.20px;top:107.53px;width:194.70px;height:9.70px;background:#313131;border:0.7px solid #3a3a3a;"></div>
<div class="t" style="left:696.20px;top:109.02px;font-size:8px;line-height:8px;color:#e6e6e6;transform:scaleX(0.7700);">X Rotation</div>
<div class="t" style="left:796.40px;top:109.02px;font-size:8px;line-height:8px;color:#e6e6e6;transform:scaleX(0.7700);">0°</div>
<div style="position:absolute;left:794.20px;top:118.48px;width:194.70px;height:9.70px;background:#313131;border:0.7px solid #3a3a3a;"></div>
<div class="t" style="left:696.20px;top:119.97px;font-size:8px;line-height:8px;color:#e6e6e6;transform:scaleX(0.7700);">Y Rotation</div>
<div class="t" style="left:796.40px;top:119.97px;font-size:8px;line-height:8px;color:#e6e6e6;transform:scaleX(0.7700);">0°</div>
<div style="position:absolute;left:794.20px;top:129.42px;width:194.70px;height:9.70px;background:#313131;border:0.7px solid #3a3a3a;"></div>
<div class="t" style="left:696.20px;top:130.91px;font-size:8px;line-height:8px;color:#e6e6e6;transform:scaleX(0.7700);">Z Rotation</div>
<div class="t" style="left:796.40px;top:130.91px;font-size:8px;line-height:8px;color:#e6e6e6;transform:scaleX(0.7700);">0°</div>
<div style="position:absolute;left:694.80px;top:140.37px;width:294.10px;height:9.70px;background:#313131;border:0.7px solid #3a3a3a;"></div>
<div class="t" style="left:833.98px;top:141.86px;font-size:8px;line-height:8px;color:#e6e6e6;transform:scaleX(0.7700);">Edit...</div>
<div style="position:absolute;left:694.80px;top:151.31px;width:294.10px;height:9.70px;background:#313131;border:0.7px solid #3a3a3a;"></div>
<div class="t" style="left:819.25px;top:152.80px;font-size:8px;line-height:8px;color:#e6e6e6;transform:scaleX(0.7700);">Edit Accessories</div>
<div style="position:absolute;left:794.20px;top:162.26px;width:194.70px;height:9.70px;background:#313131;border:0.7px solid #3a3a3a;"></div>
<div class="t" style="left:696.20px;top:163.75px;font-size:8px;line-height:8px;color:#e6e6e6;transform:scaleX(0.7700);">Symbol Name:</div>
<div class="t" style="left:796.40px;top:163.75px;font-size:8px;line-height:8px;color:#e6e6e6;transform:scaleX(0.7700);">ETC Halcyon Titanium</div>
<div style="position:absolute;left:794.20px;top:173.21px;width:194.70px;height:9.70px;background:#313131;border:0.7px solid #3a3a3a;"></div>
<div class="t" style="left:696.20px;top:174.70px;font-size:8px;line-height:8px;color:#e6e6e6;transform:scaleX(0.7700);">Instrument Type:</div>
<div class="t" style="left:796.40px;top:174.70px;font-size:8px;line-height:8px;color:#e6e6e6;transform:scaleX(0.7700);">ETC Halcyon Titanium</div>
<div style="position:absolute;left:694.80px;top:184.15px;width:294.10px;height:9.70px;background:#313131;border:0.7px solid #3a3a3a;"></div>
<div class="t" style="left:806.07px;top:185.64px;font-size:8px;line-height:8px;color:#e6e6e6;transform:scaleX(0.7700);">Replace Lighting Device...</div>
<div style="position:absolute;left:794.20px;top:195.10px;width:194.70px;height:9.70px;background:#2b2b2b;border:0.7px solid #333;"></div>
<div style="position:absolute;left:978.40px;top:195.20px;width:10.50px;height:9.50px;background:#2b2b2b;"></div>
<svg style="left:982.2px;top:199.00px" width="3" height="2.2"><path d="M0 0.1L1.4 1.9L2.8 0.1Z" fill="#aaa"/></svg>
<div class="t" style="left:696.20px;top:196.59px;font-size:8px;line-height:8px;color:#7e7e7e;transform:scaleX(0.7700);">Edit Accessory:</div>
<div style="position:absolute;left:794.20px;top:206.04px;width:194.70px;height:9.70px;background:#2b2b2b;border:0.7px solid #333;"></div>
<div style="position:absolute;left:978.40px;top:206.14px;width:10.50px;height:9.50px;background:#2b2b2b;"></div>
<svg style="left:982.2px;top:209.94px" width="3" height="2.2"><path d="M0 0.1L1.4 1.9L2.8 0.1Z" fill="#aaa"/></svg>
<div class="t" style="left:696.20px;top:207.53px;font-size:8px;line-height:8px;color:#7e7e7e;transform:scaleX(0.7700);">Edit Cell:</div>
<div class="t" style="left:796.40px;top:207.53px;font-size:8px;line-height:8px;color:#7e7e7e;transform:scaleX(0.7700);">&lt;All&gt;</div>
<div style="position:absolute;left:794.20px;top:216.99px;width:194.70px;height:9.70px;background:#313131;border:0.7px solid #3a3a3a;"></div>
<div style="position:absolute;left:978.40px;top:217.09px;width:10.50px;height:9.50px;background:#3a3a3a;"></div>
<svg style="left:982.2px;top:220.89px" width="3" height="2.2"><path d="M0 0.1L1.4 1.9L2.8 0.1Z" fill="#e6e6e6"/></svg>
<div class="t" style="left:696.20px;top:218.48px;font-size:8px;line-height:8px;color:#e6e6e6;transform:scaleX(0.7700);">Fixture Mode:</div>
<div class="t" style="left:796.40px;top:218.48px;font-size:8px;line-height:8px;color:#e6e6e6;transform:scaleX(0.7700);">None</div>
<div style="position:absolute;left:794.20px;top:227.94px;width:194.70px;height:9.70px;background:#313131;border:0.7px solid #3a3a3a;"></div>
<div style="position:absolute;left:978.40px;top:228.04px;width:10.50px;height:9.50px;background:#3a3a3a;"></div>
<svg style="left:982.2px;top:231.84px" width="3" height="2.2"><path d="M0 0.1L1.4 1.9L2.8 0.1Z" fill="#e6e6e6"/></svg>
<div class="t" style="left:696.20px;top:229.43px;font-size:8px;line-height:8px;color:#e6e6e6;transform:scaleX(0.7700);">GDTF Fixture:</div>
<div class="t" style="left:796.40px;top:229.43px;font-size:8px;line-height:8px;color:#e6e6e6;transform:scaleX(0.7700);">1</div>
<div class="t" style="left:696.20px;top:240.37px;font-size:8px;line-height:8px;color:#e6e6e6;transform:scaleX(0.7700);">GDTF Fixture Mode:</div>
<div style="position:absolute;left:694.80px;top:249.83px;width:294.10px;height:9.70px;background:#313131;border:0.7px solid #3a3a3a;"></div>
<div class="t" style="left:817.38px;top:251.32px;font-size:8px;line-height:8px;color:#e6e6e6;transform:scaleX(0.7700);">Edit GDTF Data...</div>
<div style="position:absolute;left:696.20px;top:262.67px;width:5.80px;height:5.80px;background:#4a4a4a;"></div>
<div class="t" style="left:706.30px;top:262.26px;font-size:8px;line-height:8px;color:#e6e6e6;transform:scaleX(0.7700);">Use GDTF Geometry</div>
<div style="position:absolute;left:794.20px;top:271.72px;width:194.70px;height:9.70px;background:#313131;border:0.7px solid #3a3a3a;"></div>
<div class="t" style="left:696.20px;top:273.21px;font-size:8px;line-height:8px;color:#e6e6e6;transform:scaleX(0.7700);">DMX Footprint:</div>
<div class="t" style="left:796.40px;top:273.21px;font-size:8px;line-height:8px;color:#e6e6e6;transform:scaleX(0.7700);">60</div>
<div style="position:absolute;left:794.20px;top:282.67px;width:194.70px;height:9.70px;background:#313131;border:0.7px solid #3a3a3a;"></div>
<div class="t" style="left:696.20px;top:284.16px;font-size:8px;line-height:8px;color:#e6e6e6;transform:scaleX(0.7700);">Purpose:</div>
<div style="position:absolute;left:794.20px;top:293.61px;width:194.70px;height:9.70px;background:#313131;border:0.7px solid #3a3a3a;"></div>
<div class="t" style="left:696.20px;top:295.10px;font-size:8px;line-height:8px;color:#e6e6e6;transform:scaleX(0.7700);">Position:</div>
<div style="position:absolute;left:794.20px;top:304.56px;width:194.70px;height:9.70px;background:#313131;border:0.7px solid #3a3a3a;"></div>
<div class="t" style="left:696.20px;top:306.05px;font-size:8px;line-height:8px;color:#e6e6e6;transform:scaleX(0.7700);">Unit Number:</div>
<div class="t" style="left:796.40px;top:306.05px;font-size:8px;line-height:8px;color:#e6e6e6;transform:scaleX(0.7700);">1</div>
<div style="position:absolute;left:794.20px;top:315.50px;width:194.70px;height:9.70px;background:#313131;border:0.7px solid #3a3a3a;"></div>
<div class="t" style="left:696.20px;top:316.99px;font-size:8px;line-height:8px;color:#e6e6e6;transform:scaleX(0.7700);">Channel:</div>
<div class="t" style="left:796.40px;top:316.99px;font-size:8px;line-height:8px;color:#e6e6e6;transform:scaleX(0.7700);">1</div>
<div style="position:absolute;left:794.20px;top:326.45px;width:194.70px;height:9.70px;background:#313131;border:0.7px solid #3a3a3a;"></div>
<div class="t" style="left:696.20px;top:327.94px;font-size:8px;line-height:8px;color:#e6e6e6;transform:scaleX(0.7700);">Universe/Address:</div>
<div class="t" style="left:796.40px;top:327.94px;font-size:8px;line-height:8px;color:#e6e6e6;transform:scaleX(0.7700);">1/101</div>
<div style="position:absolute;left:794.20px;top:337.40px;width:194.70px;height:9.70px;background:#313131;border:0.7px solid #3a3a3a;"></div>
<div class="t" style="left:696.20px;top:338.89px;font-size:8px;line-height:8px;color:#e6e6e6;transform:scaleX(0.7700);">Universe:</div>
<div class="t" style="left:796.40px;top:338.89px;font-size:8px;line-height:8px;color:#e6e6e6;transform:scaleX(0.7700);">1</div>
<div style="position:absolute;left:794.20px;top:348.34px;width:194.70px;height:9.70px;background:#313131;border:0.7px solid #3a3a3a;"></div>
<div class="t" style="left:696.20px;top:349.83px;font-size:8px;line-height:8px;color:#e6e6e6;transform:scaleX(0.7700);">DMX Address:</div>
<div class="t" style="left:796.40px;top:349.83px;font-size:8px;line-height:8px;color:#e6e6e6;transform:scaleX(0.7700);">101</div>
<div style="position:absolute;left:794.20px;top:359.29px;width:194.70px;height:9.70px;background:#313131;border:0.7px solid #3a3a3a;"></div>
<div class="t" style="left:696.20px;top:360.78px;font-size:8px;line-height:8px;color:#e6e6e6;transform:scaleX(0.7700);">Absolute Address:</div>
<div class="t" style="left:796.40px;top:360.78px;font-size:8px;line-height:8px;color:#e6e6e6;transform:scaleX(0.7700);">101</div>
<div style="position:absolute;left:794.20px;top:370.23px;width:194.70px;height:9.70px;background:#313131;border:0.7px solid #3a3a3a;"></div>
<div class="t" style="left:696.20px;top:371.72px;font-size:8px;line-height:8px;color:#e6e6e6;transform:scaleX(0.7700);">Dimmer:</div>
<div style="position:absolute;left:794.20px;top:381.18px;width:194.70px;height:9.70px;background:#313131;border:0.7px solid #3a3a3a;"></div>
<div class="t" style="left:696.20px;top:382.67px;font-size:8px;line-height:8px;color:#e6e6e6;transform:scaleX(0.7700);">Circuit Number:</div>
<div style="position:absolute;left:794.20px;top:392.13px;width:194.70px;height:9.70px;background:#313131;border:0.7px solid #3a3a3a;"></div>
<div class="t" style="left:696.20px;top:393.62px;font-size:8px;line-height:8px;color:#e6e6e6;transform:scaleX(0.7700);">Circuit Name:</div>
<div style="position:absolute;left:794.20px;top:403.07px;width:194.70px;height:9.70px;background:#313131;border:0.7px solid #3a3a3a;"></div>
<div class="t" style="left:696.20px;top:404.56px;font-size:8px;line-height:8px;color:#e6e6e6;transform:scaleX(0.7700);">Color:</div>
<div style="position:absolute;left:794.20px;top:414.02px;width:194.70px;height:9.70px;background:#313131;border:0.7px solid #3a3a3a;"></div>
<div class="t" style="left:696.20px;top:415.51px;font-size:8px;line-height:8px;color:#e6e6e6;transform:scaleX(0.7700);">Frame Size:</div>
<div class="t" style="left:796.40px;top:415.51px;font-size:8px;line-height:8px;color:#e6e6e6;transform:scaleX(0.7700);">60"</div>
<div style="position:absolute;left:794.20px;top:424.96px;width:194.70px;height:9.70px;background:#313131;border:0.7px solid #3a3a3a;"></div>
<div class="t" style="left:696.20px;top:426.45px;font-size:8px;line-height:8px;color:#e6e6e6;transform:scaleX(0.7700);">Gobo 1:</div>
<div style="position:absolute;left:794.20px;top:435.91px;width:194.70px;height:9.70px;background:#313131;border:0.7px solid #3a3a3a;"></div>
<div class="t" style="left:696.20px;top:437.40px;font-size:8px;line-height:8px;color:#e6e6e6;transform:scaleX(0.7700);">Gobo 1 Rotation:</div>
<div class="t" style="left:796.40px;top:437.40px;font-size:8px;line-height:8px;color:#e6e6e6;transform:scaleX(0.7700);">0°</div>
<div style="position:absolute;left:794.20px;top:446.86px;width:194.70px;height:9.70px;background:#313131;border:0.7px solid #3a3a3a;"></div>
<div class="t" style="left:696.20px;top:448.35px;font-size:8px;line-height:8px;color:#e6e6e6;transform:scaleX(0.7700);">Gobo 2:</div>
<div style="position:absolute;left:794.20px;top:457.80px;width:194.70px;height:9.70px;background:#313131;border:0.7px solid #3a3a3a;"></div>
<div class="t" style="left:696.20px;top:459.29px;font-size:8px;line-height:8px;color:#e6e6e6;transform:scaleX(0.7700);">Gobo 2 Rotation:</div>
<div class="t" style="left:796.40px;top:459.29px;font-size:8px;line-height:8px;color:#e6e6e6;transform:scaleX(0.7700);">0°</div>
<div style="position:absolute;left:794.20px;top:468.75px;width:194.70px;height:9.70px;background:#313131;border:0.7px solid #3a3a3a;"></div>
<div style="position:absolute;left:978.40px;top:468.85px;width:10.50px;height:9.50px;background:#3a3a3a;"></div>
<svg style="left:982.2px;top:472.65px" width="3" height="2.2"><path d="M0 0.1L1.4 1.9L2.8 0.1Z" fill="#e6e6e6"/></svg>
<div class="t" style="left:696.20px;top:470.24px;font-size:8px;line-height:8px;color:#e6e6e6;transform:scaleX(0.7700);">Use Legend:</div>
<div class="t" style="left:796.40px;top:470.24px;font-size:8px;line-height:8px;color:#e6e6e6;transform:scaleX(0.7700);">Vari*Lite</div>
<div style="position:absolute;left:794.20px;top:479.69px;width:194.70px;height:9.70px;background:#313131;border:0.7px solid #3a3a3a;"></div>
<div style="position:absolute;left:978.40px;top:479.79px;width:10.50px;height:9.50px;background:#3a3a3a;"></div>
<svg style="left:982.2px;top:483.59px" width="3" height="2.2"><path d="M0 0.1L1.4 1.9L2.8 0.1Z" fill="#e6e6e6"/></svg>
<div class="t" style="left:696.20px;top:481.18px;font-size:8px;line-height:8px;color:#e6e6e6;transform:scaleX(0.7700);">3D Legend View:</div>
<div style="position:absolute;left:705.8px;top:492.54px;width:5.8px;height:5.8px;background:#363636;border:0.8px solid #3c3c3c;"></div>
<div class="t" style="left:716.20px;top:492.13px;font-size:8px;line-height:8px;color:#7e7e7e;transform:scaleX(0.7700);">Flip top and bottom 3D legend</div>
<div style="position:absolute;left:705.8px;top:503.49px;width:5.8px;height:5.8px;background:#363636;border:0.8px solid #3c3c3c;"></div>
<div class="t" style="left:716.20px;top:503.08px;font-size:8px;line-height:8px;color:#7e7e7e;transform:scaleX(0.7700);">Flip left and right 3D legend</div>
<div style="position:absolute;left:696.2px;top:514.43px;width:5.8px;height:5.8px;background:#2a2a2a;border:0.8px solid #4c4c4c;"></div>
<div class="t" style="left:706.30px;top:514.02px;font-size:8px;line-height:8px;color:#e6e6e6;transform:scaleX(0.7700);">Rotate 3D legend with Z rotation</div>
<div style="position:absolute;left:696.2px;top:525.38px;width:5.8px;height:5.8px;background:#2a2a2a;border:0.8px solid #4c4c4c;"></div>
<div class="t" style="left:706.30px;top:524.97px;font-size:8px;line-height:8px;color:#e6e6e6;transform:scaleX(0.7700);">Flip front and back 2D legend</div>
<div style="position:absolute;left:696.20px;top:536.32px;width:5.80px;height:5.80px;background:#4a4a4a;"></div>
<div class="t" style="left:706.30px;top:535.91px;font-size:8px;line-height:8px;color:#e6e6e6;transform:scaleX(0.7700);">Flip left and right 2D legend</div>
<div style="position:absolute;left:989.60px;top:51.50px;width:10.40px;height:488.00px;background:#444444;"></div>
<div style="position:absolute;left:991.60px;top:62.80px;width:4.50px;height:171.50px;background:#2e2e2e;"></div>
<svg style="left:991.4px;top:55.6px" width="5.2" height="4"><path d="M0 3.3L2.6 0.3L5.2 3.3Z" fill="#f0f0f0"/></svg>
<svg style="left:991.4px;top:532.6px" width="5.2" height="4"><path d="M0 0.3L2.6 3.3L5.2 0.3Z" fill="#f0f0f0"/></svg>
<div style="position:absolute;left:693.20px;top:539.00px;width:306.80px;height:18.60px;background:#333333;"></div>
<div style="position:absolute;left:693.20px;top:539.00px;width:306.80px;height:0.80px;background:#3e3e3e;"></div>
<div class="t" style="left:695.40px;top:543.84px;font-size:8px;line-height:8px;color:#e6e6e6;transform:scaleX(0.7215);">Name:</div>
<div style="position:absolute;left:715.4px;top:541.9px;width:284.6px;height:11px;background:#2b2b2b;border:0.8px solid #404040;"></div>
<div style="position:absolute;left:693.20px;top:554.30px;width:306.80px;height:3.20px;background:#3c3c3c;"></div>
<div style="position:absolute;left:693.20px;top:557.50px;width:306.80px;height:13.50px;background:#333333;"></div>
<div class="t" style="left:695.50px;top:561.04px;font-size:8px;line-height:8px;color:#ececec;transform:scaleX(0.8382);">Navigation - Design Layers</div>
<svg style="left:958.3px;top:562.8px" width="6" height="5"><path d="M0 0.6H5.6M0 2.2H5.6M0 3.8H5.6" stroke="#d0d0d0" stroke-width="0.7"/></svg>
<div class="t" style="left:970.13px;top:561.48px;font-size:7.5px;line-height:7.5px;color:#dcdcdc;transform:scaleX(0.8500);">?</div>
<svg style="left:980.5px;top:562px" width="5" height="6.5"><path d="M1.3 0.4H3.7V2.8H1.3ZM0.4 3.1H4.6M2.5 3.1V6" stroke="#dcdcdc" stroke-width="0.8" fill="none"/></svg>
<svg style="left:991.8px;top:562.8px" width="5" height="5"><path d="M0.4 0.4L4.2 4.2M4.2 0.4L0.4 4.2" stroke="#e8e8e8" stroke-width="0.95" fill="none"/></svg>
</body></html>
